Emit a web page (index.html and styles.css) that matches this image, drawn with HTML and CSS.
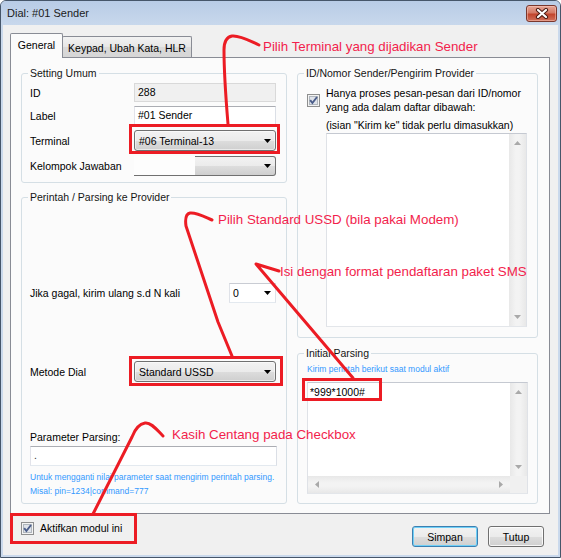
FILE: index.html
```html
<!DOCTYPE html>
<html>
<head>
<meta charset="utf-8">
<link rel="stylesheet" href="styles.css">
</head>
<body>
<div class="window">
  <div class="titlebar">
    <span class="title">Dial: #01 Sender</span>
    <div class="close">
      <svg width="14" height="11" viewBox="0 0 14 11"><path d="M3 2L11 9M11 2L3 9" stroke="#4a1a12" stroke-width="4.2" stroke-linecap="round"/><path d="M3 2L11 9M11 2L3 9" stroke="#fff" stroke-width="2.2" stroke-linecap="round"/></svg>
    </div>
  </div>
  <div class="body">
    <div class="tabs">
      <div class="tab active">General</div>
      <div class="tab">Keypad, Ubah Kata, HLR</div>
    </div>
    <div class="panel">
      <div class="col">
        <div class="group g-setting">
          <span class="legend">Setting Umum</span>
          <div class="form-row r-id"><span>ID</span><div class="input ro">288</div></div>
          <div class="form-row r-label"><span>Label</span><div class="input">#01 Sender</div></div>
          <div class="form-row r-term"><span>Terminal</span><div class="combo">#06 Terminal-13<span class="dd"><svg width="7" height="4"><path d="M0 0H7L3.5 4Z" fill="#000"/></svg></span></div></div>
          <div class="form-row r-kel"><span>Kelompok Jawaban</span><div class="combo-split"><span class="blank"></span><span class="btnpart"><span class="dd"><svg width="7" height="4"><path d="M0 0H7L3.5 4Z" fill="#000"/></svg></span></span></div></div>
        </div>
        <div class="group g-perintah">
          <span class="legend">Perintah / Parsing ke Provider</span>
          <div class="retry-row"><span>Jika gagal, kirim ulang s.d N kali</span><div class="edit-combo">0<span class="dd"><svg width="7" height="4"><path d="M0 0H7L3.5 4Z" fill="#000"/></svg></span></div></div>
          <div class="form-row r-metode"><span>Metode Dial</span><div class="combo">Standard USSD<span class="dd"><svg width="7" height="4"><path d="M0 0H7L3.5 4Z" fill="#000"/></svg></span></div></div>
          <div class="param-label">Parameter Parsing:</div>
          <div class="input param">.</div>
          <p class="hint hint-param">Untuk mengganti nilai parameter saat mengirim perintah parsing.<br>Misal: pin=1234|command=777</p>
        </div>
      </div>
      <div class="col">
        <div class="group g-idnomor">
          <span class="legend">ID/Nomor Sender/Pengirim Provider</span>
          <div class="check-row">
            <svg class="cb" width="13" height="13" viewBox="0 0 13 13"><rect x="0.5" y="0.5" width="12" height="12" fill="#f3f3f3" stroke="#8e8f8f"/><rect x="2.5" y="2.5" width="8" height="8" fill="#dfe3ea" stroke="#b0b6bd"/><path d="M3.2 6.2L5.4 9L10 3" fill="none" stroke="#4b5d8a" stroke-width="1.9"/></svg>
            <span>Hanya proses pesan-pesan dari ID/nomor<br>yang ada dalam daftar dibawah:</span>
          </div>
          <div class="note">(isian "Kirim ke" tidak perlu dimasukkan)</div>
          <div class="listbox">
            <div class="area"></div>
            <div class="vscroll">
              <svg width="7" height="4"><path d="M0 4H7L3.5 0Z" fill="#a9a9a9"/></svg>
              <svg width="7" height="4"><path d="M0 0H7L3.5 4Z" fill="#a9a9a9"/></svg>
            </div>
          </div>
        </div>
        <div class="group g-initial">
          <span class="legend">Initial Parsing</span>
          <div class="hint hint-init">Kirim perintah berikut saat modul aktif</div>
          <div class="textarea">
            <div class="ta-text">*999*1000#</div>
            <div class="vscroll">
              <svg width="7" height="4"><path d="M0 4H7L3.5 0Z" fill="#a9a9a9"/></svg>
              <svg width="7" height="4"><path d="M0 0H7L3.5 4Z" fill="#a9a9a9"/></svg>
            </div>
            <div class="hscroll">
              <svg width="4" height="7"><path d="M4 0V7L0 3.5Z" fill="#a9a9a9"/></svg>
              <svg width="4" height="7"><path d="M0 0V7L4 3.5Z" fill="#a9a9a9"/></svg>
            </div>
            <div class="corner"></div>
          </div>
        </div>
      </div>
    </div>
    <div class="footer">
      <div class="check">
        <svg class="cb" width="13" height="13" viewBox="0 0 13 13"><rect x="0.5" y="0.5" width="12" height="12" fill="#f3f3f3" stroke="#8e8f8f"/><rect x="2.5" y="2.5" width="8" height="8" fill="#dfe3ea" stroke="#b0b6bd"/><path d="M3.2 6.2L5.4 9L10 3" fill="none" stroke="#4b5d8a" stroke-width="1.9"/></svg>
        <span>Aktifkan modul ini</span>
      </div>
      <div class="buttons">
        <button class="wbtn default">Simpan</button>
        <button class="wbtn">Tutup</button>
      </div>
    </div>
  </div>
</div>
<div class="annot">
  <svg class="marks" width="561" height="560" viewBox="0 0 561 560">
    <g fill="none" stroke="#ec1c24" stroke-width="3">
      <rect x="130.5" y="125.5" width="148" height="27"/>
      <rect x="130.5" y="357.5" width="151" height="27"/>
      <rect x="303.5" y="379.5" width="77" height="20"/>
      <rect x="11.5" y="514.5" width="124" height="28"/>
    </g>
    <g fill="none" stroke="#ec1c24" stroke-width="3" stroke-linecap="round" stroke-linejoin="round">
      <path d="M259,45 C250,41 240,35 232,36 C226,37 224,42 224,50 C224,75 226,100 228,124"/>
      <path d="M212,220 C205,217 196,212 190,213 C186,214 185,219 186,226 L218,322 L232,356"/>
      <path d="M279,271 L256,264 L353,378"/>
      <path d="M163,436 C157,430 151,422 145,423 C139,424 135,429 132,437 L93,514"/>
    </g>
  </svg>
  <div class="callout c1">Pilih Terminal yang dijadikan Sender</div>
  <div class="callout c2">Pilih Standard USSD (bila pakai Modem)</div>
  <div class="callout c3">Isi dengan format pendaftaran paket SMS</div>
  <div class="callout c4">Kasih Centang pada Checkbox</div>
</div>
</body>
</html>
```

FILE: styles.css
```css
html, body {
  margin: 0;
  padding: 0;
}
body {
  width: 561px;
  height: 560px;
  position: relative;
  overflow: hidden;
  background: #ffffff;
  font-family: "Liberation Sans", Arial, sans-serif;
  font-size: 10.5px;
  color: #000;
}
.window {
  box-sizing: border-box;
  width: 561px;
  height: 558px;
  border: 1px solid #46566a;
  border-radius: 6px 6px 0 0;
  background: #cad9ec;
  display: flex;
  flex-direction: column;
}
.titlebar {
  flex: none;
  height: 24px;
  display: flex;
  align-items: center;
  justify-content: space-between;
  padding: 0 3px 0 6px;
  background: linear-gradient(#b8cce6, #c8d8ec);
  border-radius: 5px 5px 0 0;
}
.title {
  font-size: 11px;
  color: #1b1b1b;
}
.close {
  box-sizing: border-box;
  width: 31px;
  height: 17px;
  border: 1px solid #7a372d;
  border-radius: 3px;
  background: linear-gradient(#e6a596, #d47a66 45%, #c2452d 55%, #d0715b);
  box-shadow: inset 0 0 0 1px rgba(255, 210, 200, 0.45);
  display: flex;
  align-items: center;
  justify-content: center;
}
.body {
  flex: 1;
  margin: 0 2px 2px;
  background: #f0f0f0;
  padding: 8px 0 0 7px;
  display: flex;
  flex-direction: column;
}
.tabs {
  display: flex;
  align-items: flex-end;
  height: 24px;
  position: relative;
  z-index: 2;
}
.tab {
  box-sizing: border-box;
  border: 1px solid #898c95;
  border-bottom: none;
  border-radius: 2px 2px 0 0;
  display: flex;
  align-items: center;
  justify-content: center;
}
.tab.active {
  width: 53px;
  height: 25px;
  margin-bottom: -1px;
  background: #fbfbfb;
  padding-bottom: 2px;
}
.tab:not(.active) {
  width: 130px;
  height: 21px;
  margin-left: -1px;
  background: linear-gradient(#f2f2f2, #e6e6e6 50%, #dadada 51%, #d6d6d6);
  padding-top: 1px;
}
.panel {
  box-sizing: border-box;
  width: 540px;
  height: 457px;
  border: 1px solid #898c95;
  background: #fbfbfb;
  padding: 15px 11px 9px 10px;
  display: grid;
  grid-template-columns: 266px 241px;
  column-gap: 10px;
}
.col {
  display: flex;
  flex-direction: column;
}
.group {
  position: relative;
  box-sizing: border-box;
  border: 1px solid #d5dfe5;
  border-radius: 3px;
  display: flex;
  flex-direction: column;
}
.legend {
  position: absolute;
  top: -8px;
  left: 6px;
  padding: 0 2px;
  line-height: 14px;
  background: #fbfbfb;
  color: #151515;
}
.g-setting {
  height: 110px;
  padding: 9px 0 0 8px;
}
.g-perintah {
  height: 307px;
  margin-top: 14px;
  padding: 85px 9px 0 8px;
}
.g-idnomor {
  height: 265px;
  padding: 12px 10px 0 9px;
}
.g-initial {
  height: 151px;
  margin-top: 15px;
  padding: 9px 9px 0 9px;
}
.form-row {
  display: grid;
  grid-template-columns: 104px 142px;
  align-items: center;
}
.r-id { height: 19px; margin-bottom: 4px; }
.r-label { height: 19px; margin-bottom: 5px; }
.r-term { height: 21px; margin-bottom: 5px; }
.r-kel { height: 20px; }
.r-metode { height: 21px; margin-top: 58px; }
.input {
  box-sizing: border-box;
  height: 19px;
  border: 1px solid;
  border-color: #abadb3 #dbdfe6 #e3e9ef #e2e3ea;
  background: #fff;
  padding: 0 3px;
  line-height: 17px;
  white-space: nowrap;
}
.input.ro {
  background: #f0f0f0;
  border-color: #d9d9d9;
}
.combo {
  box-sizing: border-box;
  height: 100%;
  border: 1px solid #707070;
  border-radius: 3px;
  background: linear-gradient(#f2f2f2, #ebebeb 50%, #dddddd 51%, #cfcfcf);
  box-shadow: inset 0 0 0 1px rgba(255, 255, 255, 0.55);
  display: flex;
  align-items: center;
  padding-left: 4px;
}
.dd {
  margin-left: auto;
  width: 16px;
  display: flex;
  justify-content: center;
  align-items: center;
}
.combo-split {
  box-sizing: border-box;
  height: 100%;
  display: flex;
}
.combo-split .blank {
  width: 61px;
  border-bottom: 1px solid #707070;
  background: #fdfdfd;
}
.combo-split .btnpart {
  flex: 1;
  display: flex;
  align-items: center;
  border: 1px solid #707070;
  border-left: none;
  border-radius: 0 3px 3px 0;
  background: linear-gradient(#f2f2f2, #ebebeb 50%, #dddddd 51%, #cfcfcf);
}
.retry-row {
  height: 20px;
  display: flex;
  align-items: center;
  justify-content: space-between;
  padding-right: 1px;
}
.edit-combo {
  box-sizing: border-box;
  width: 47px;
  height: 20px;
  border: 1px solid;
  border-color: #c9ccd3 #dfe2e8 #e3e9ef #dfe2e8;
  background: #fff;
  display: flex;
  align-items: center;
  padding-left: 3px;
}
.param-label {
  margin-top: 49px;
  line-height: 13px;
}
.input.param {
  margin-top: 2px;
  height: 20px;
  width: 247px;
  color: #333;
}
.hint {
  margin: 0;
  color: #3399ff;
  font-size: 8.5px;
  white-space: nowrap;
}
.hint-param {
  margin-top: 4px;
  line-height: 14px;
}
.check-row {
  display: flex;
  align-items: center;
  line-height: 14px;
}
.cb {
  flex: none;
}
.check-row .cb {
  margin-right: 6px;
}
.note {
  margin: 4px 0 0 19px;
  line-height: 14px;
}
.listbox {
  box-sizing: border-box;
  margin: 1px 0 0 19px;
  width: 201px;
  height: 194px;
  border: 1px solid;
  border-color: #c5c9d1 #dfe2e7 #e3e6ea #dfe2e7;
  background: #fff;
  display: flex;
}
.listbox .area {
  flex: 1;
}
.vscroll {
  width: 17px;
  background: linear-gradient(to right, #e8e8e8, #f3f3f3 40%, #f3f3f3 60%, #e8e8e8);
  display: flex;
  flex-direction: column;
  justify-content: space-between;
  align-items: center;
  padding: 7px 0;
  box-sizing: border-box;
}
.hint-init {
  line-height: 12px;
}
.textarea {
  box-sizing: border-box;
  margin-top: 7px;
  width: 221px;
  height: 112px;
  border: 1px solid;
  border-color: #c5c9d1 #dfe2e7 #e3e6ea #dfe2e7;
  background: #fff;
  display: grid;
  grid-template-columns: 1fr 17px;
  grid-template-rows: 1fr 17px;
}
.ta-text {
  padding: 2px 0 0 2px;
  line-height: 14px;
}
.hscroll {
  background: linear-gradient(#e8e8e8, #f3f3f3 40%, #f3f3f3 60%, #e8e8e8);
  display: flex;
  justify-content: space-between;
  align-items: center;
  padding: 0 7px;
}
.corner {
  background: #f0f0f0;
}
.footer {
  flex: 1;
  display: flex;
  align-items: flex-start;
}
.check {
  margin: 8px 0 0 11px;
  display: flex;
  align-items: center;
  line-height: 13px;
}
.check .cb {
  margin-right: 6px;
}
.buttons {
  margin: 12px 14px 0 auto;
  display: flex;
  gap: 10px;
}
.wbtn {
  box-sizing: border-box;
  height: 21px;
  padding: 0;
  border: 1px solid #707070;
  border-radius: 3px;
  background: linear-gradient(#f2f2f2, #ebebeb 50%, #dddddd 51%, #cfcfcf);
  box-shadow: inset 0 0 0 1px rgba(255, 255, 255, 0.8);
  font-family: "Liberation Sans", Arial, sans-serif;
  font-size: 10.5px;
  color: #000;
  width: 56px;
}
.wbtn.default {
  width: 66px;
  border-color: #3c7fb1;
  box-shadow: inset 0 0 0 1px #6fd0f7;
}
.annot {
  position: absolute;
  left: 0;
  top: 0;
  width: 561px;
  height: 560px;
  pointer-events: none;
}
.marks {
  position: absolute;
  left: 0;
  top: 0;
}
.callout {
  position: absolute;
  font-family: "Liberation Sans", Arial, sans-serif;
  font-size: 13.33px;
  line-height: 16px;
  color: #f21e4c;
  white-space: nowrap;
}
.c1 { left: 263px; top: 39px; }
.c2 { left: 218px; top: 212px; }
.c3 { left: 280px; top: 264px; }
.c4 { left: 172px; top: 427px; }
```
